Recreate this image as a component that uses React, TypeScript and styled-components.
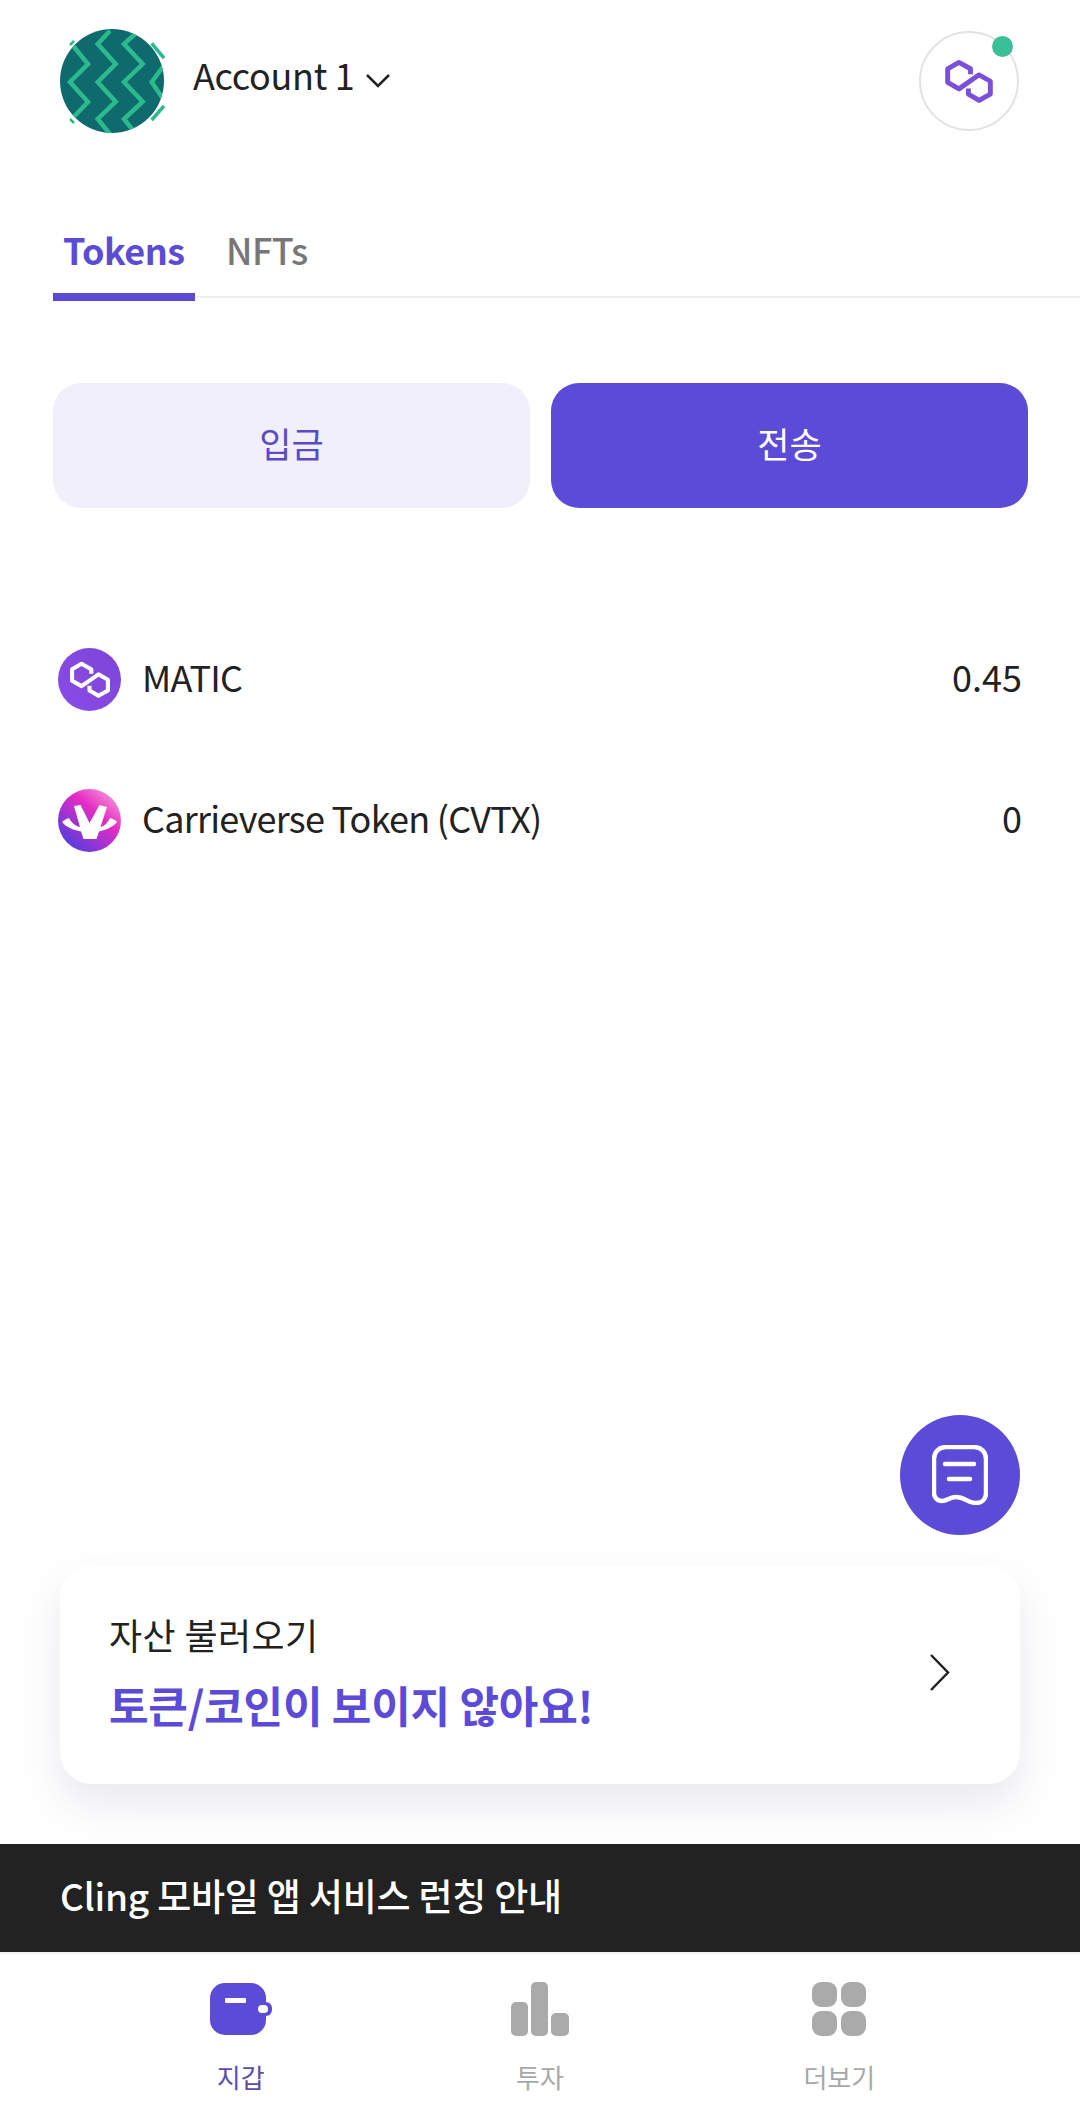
import React from 'react';
import styled, { createGlobalStyle } from 'styled-components';

const PURPLE = '#5b4bd6';
const FONT = '"Noto Sans CJK KR", "Noto Sans", sans-serif';

const GlobalStyle = createGlobalStyle`
	html, body {
		margin: 0;
		padding: 0;
		background: #fff;
	}
	* {
		box-sizing: border-box;
	}
`;

const Page = styled.div`
	width: 1080px;
	height: 2120px;
	display: flex;
	flex-direction: column;
	overflow: hidden;
	background: #fff;
	font-family: ${FONT};
	color: #222;
`;

const Header = styled.header`
	display: flex;
	align-items: center;
	justify-content: space-between;
	padding: 29px 61px 0 60px;
`;

const AccountButton = styled.div`
	display: flex;
	align-items: center;
	gap: 12px;
`;

const AccountName = styled.span`
	margin-left: 16px;
	padding-bottom: 14px;
	font-size: 36px;
	line-height: 52px;
	letter-spacing: -0.3px;
`;

const NetworkBadge = styled.div`
	position: relative;
	width: 100px;
	height: 100px;
	border: 2px solid #e2e2e2;
	border-radius: 50%;
	display: flex;
	align-items: center;
	justify-content: center;
`;

const StatusDot = styled.span`
	position: absolute;
	top: 3px;
	right: 4px;
	width: 21px;
	height: 21px;
	border-radius: 50%;
	background: #3bbf97;
`;

const TabBar = styled.nav`
	display: flex;
	margin: 86px 0 0 53px;
	border-bottom: 2px solid #eee;
`;

const Tab = styled.div<{ $active?: boolean }>`
	width: ${(p) => (p.$active ? '142px' : 'auto')};
	height: 82px;
	margin-bottom: -5px;
	padding: 4px 0 0 ${(p) => (p.$active ? '10px' : '31px')};
	border-bottom: ${(p) => (p.$active ? `8px solid ${PURPLE}` : 'none')};
	font-size: 36px;
	line-height: 52px;
	letter-spacing: -0.5px;
	font-weight: ${(p) => (p.$active ? 700 : 500)};
	color: ${(p) => (p.$active ? PURPLE : '#777')};
`;

const Actions = styled.div`
	display: grid;
	grid-template-columns: 1fr 1fr;
	gap: 21px;
	margin: 85px 52px 0 53px;
`;

const ActionButton = styled.button<{ $primary?: boolean }>`
	height: 125px;
	padding: 0 0 7px;
	border: 0;
	border-radius: 28px;
	font-family: ${FONT};
	font-size: 35px;
	background: ${(p) => (p.$primary ? PURPLE : '#f1effb')};
	color: ${(p) => (p.$primary ? '#fff' : '#5a4bc4')};
`;

const TokenList = styled.div`
	margin-top: 101px;
	padding: 0 58px;
`;

const TokenRow = styled.div`
	height: 141px;
	display: flex;
	align-items: center;
	font-size: 36px;
`;

const TokenName = styled.span`
	flex: 1;
	margin-left: 21px;
	padding-bottom: 8px;
	letter-spacing: -0.75px;
`;

const TokenValue = styled.span`
	padding-bottom: 8px;
`;

const TokenIcon = styled.div<{ $bg: string }>`
	width: 63px;
	height: 63px;
	border-radius: 50%;
	display: flex;
	align-items: center;
	justify-content: center;
	background: ${(p) => p.$bg};
`;

const Bottom = styled.div`
	margin-top: auto;
	display: flex;
	flex-direction: column;
`;

const Fab = styled.button`
	align-self: flex-end;
	width: 120px;
	height: 120px;
	margin-right: 60px;
	padding: 0;
	border: 0;
	border-radius: 50%;
	background: ${PURPLE};
	display: flex;
	align-items: center;
	justify-content: center;
`;

const ImportCard = styled.div`
	height: 219px;
	margin: 30px 60px 0;
	padding: 0 69px 0 49px;
	border-radius: 32px;
	background: #fff;
	box-shadow: 0 20px 44px rgba(70, 70, 120, 0.12);
	display: flex;
	align-items: center;
	justify-content: space-between;
`;

const CardText = styled.div`
	padding-bottom: 8px;
`;

const CardTitle = styled.div`
	font-size: 36px;
	line-height: 50px;
	letter-spacing: 0.4px;
`;

const CardHeadline = styled.div`
	margin-top: 16px;
	font-size: 43px;
	line-height: 58px;
	font-weight: 700;
	letter-spacing: -0.2px;
	color: ${PURPLE};
`;

const CardChevron = styled.div`
	display: flex;
	margin-bottom: 5px;
`;

const NoticeBar = styled.div`
	height: 108px;
	margin-top: 60px;
	padding-left: 60px;
	background: #222;
	color: #fff;
	font-size: 37px;
	font-weight: 500;
	line-height: 102px;
	letter-spacing: -0.2px;
`;

const NavBar = styled.nav`
	height: 168px;
	padding: 27px 91px 0;
	display: grid;
	grid-template-columns: repeat(3, 1fr);
	border-top: 2px solid #f1f1f1;
`;

const NavItem = styled.div<{ $active?: boolean }>`
	display: flex;
	flex-direction: column;
	align-items: center;
	font-size: 26px;
	line-height: 38px;
	color: ${(p) => (p.$active ? '#5a4db0' : '#a8a8a8')};
`;

const NavIcon = styled.div`
	height: 56px;
	margin-bottom: 21px;
	display: flex;
	align-items: center;
`;

const PolygonMark: React.FC<{ color: string; width: number; stroke?: number }> = ({ color, width, stroke = 16 }) => (
	<svg width={width} viewBox="188 168 164 147" fill="none">
		<path
			d="M275 218V200L237 179L200 200V245L237 266L303 220L340 241V283L303 304L268 283V265"
			stroke={color}
			strokeWidth={stroke}
			strokeLinejoin="round"
		/>
	</svg>
);

const Avatar = () => (
	<svg width="105" height="104" viewBox="0 0 105 104" fill="none">
		<defs>
			<clipPath id="avatarClip">
				<circle cx="52" cy="52" r="52" />
			</clipPath>
		</defs>
		<circle cx="52" cy="52" r="52" fill="#0f6a6e" />
		<g clipPath="url(#avatarClip)" stroke="#2cb98b" strokeWidth="4.5">
			<path d="M11.7 15L28 35L10 53L28 73L11.7 90" />
			<path d="M50 1.7L37.7 15L55.7 35L37.7 53L55.7 72.7L37.7 90L50 105" />
			<path d="M76 4L64 15L82.7 35L64 53L82.7 72.7L64 90L76 105" />
			<path d="M105 35L91.7 53L105 72.7" />
		</g>
		<path d="M91.7 14.4L104 29M104 77L91.7 91" stroke="#2cb98b" strokeWidth="3.5" />
		<path d="M10 16L14 12M10 90L14 94" stroke="#2cb98b" strokeWidth="2.5" />
	</svg>
);

const CvtxMark = () => (
	<svg width="63" height="63" viewBox="0 0 63 63">
		<path
			d="M16 17L22.5 16L31.5 34L41.5 16L49 18L42.5 38C47 37 50 33 52 29C55 30 58 31 59 33C55 38 48 41 41 42.5L38.5 50L25.5 50L23 42.5C15 41 8 38 4 33C6 31 8 30 11 29C13 33 17 37 22 38Z"
			fill="#fff"
		/>
	</svg>
);

const Chevron: React.FC<{ width: number; height: number; d: string; box: string }> = ({ width, height, d, box }) => (
	<svg width={width} height={height} viewBox={box} fill="none">
		<path d={d} stroke="#222" strokeWidth="2.5" />
	</svg>
);

const NotesIcon = () => (
	<svg width="56" height="60" viewBox="0 0 56 60" fill="none" stroke="#fff" strokeWidth="4.5" strokeLinecap="round">
		<path d="M14 2H42C49 2 54 7 54 14V48C54 54 50 58 44 58C36 58 33 52 24 52C18 52 15 56 10 56C5 56 2 52 2 48V14C2 7 7 2 14 2Z" />
		<path d="M13 19H42M17 34H38" />
	</svg>
);

const WalletIcon = () => (
	<svg width="62" height="52" viewBox="0 0 62 52">
		<rect x="0" y="0" width="56" height="52" rx="15" fill={PURPLE} />
		<rect x="44" y="19" width="18" height="14" rx="6" fill={PURPLE} />
		<rect x="48" y="22" width="10" height="8" rx="4" fill="#fff" />
		<rect x="15" y="15" width="21" height="5" rx="1" fill="#fff" />
	</svg>
);

const BarsIcon = () => (
	<svg width="58" height="54" viewBox="0 0 58 54" fill="#aaa">
		<rect x="0" y="20" width="17" height="34" rx="5" />
		<rect x="20" y="0" width="17" height="54" rx="5" />
		<rect x="40" y="31" width="18" height="23" rx="5" />
	</svg>
);

const GridIcon = () => (
	<svg width="54" height="54" viewBox="0 0 54 54" fill="#aaa">
		<rect x="0" y="0" width="25" height="25" rx="9" />
		<rect x="29" y="0" width="25" height="25" rx="9" />
		<rect x="0" y="29" width="25" height="25" rx="9" />
		<rect x="29" y="29" width="25" height="25" rx="9" />
	</svg>
);

const App: React.FC = () => (
	<Page>
		<GlobalStyle />
		<Header>
			<AccountButton>
				<Avatar />
				<AccountName>Account 1</AccountName>
				<Chevron width={24} height={14} box="0 0 24 14" d="M1 1L12 12L23 1" />
			</AccountButton>
			<NetworkBadge>
				<PolygonMark color="#7b4fd8" width={50} />
				<StatusDot />
			</NetworkBadge>
		</Header>

		<TabBar>
			<Tab $active>Tokens</Tab>
			<Tab>NFTs</Tab>
		</TabBar>

		<Actions>
			<ActionButton>입금</ActionButton>
			<ActionButton $primary>전송</ActionButton>
		</Actions>

		<TokenList>
			<TokenRow>
				<TokenIcon $bg="linear-gradient(45deg, #8a4be8, #7d45d6)">
					<PolygonMark color="#fff" width={42} />
				</TokenIcon>
				<TokenName>MATIC</TokenName>
				<TokenValue>0.45</TokenValue>
			</TokenRow>
			<TokenRow>
				<TokenIcon $bg="linear-gradient(40deg, #4f3ce0 10%, #e52cc4 62%, #f7a6da 95%)">
					<CvtxMark />
				</TokenIcon>
				<TokenName>Carrieverse Token (CVTX)</TokenName>
				<TokenValue>0</TokenValue>
			</TokenRow>
		</TokenList>

		<Bottom>
			<Fab>
				<NotesIcon />
			</Fab>
			<ImportCard>
				<CardText>
					<CardTitle>자산 불러오기</CardTitle>
					<CardHeadline>토큰/코인이 보이지 않아요!</CardHeadline>
				</CardText>
				<CardChevron>
					<Chevron width={22} height={37} box="0 0 22 37" d="M2 1L19 18.5L2 36" />
				</CardChevron>
			</ImportCard>
			<NoticeBar>Cling 모바일 앱 서비스 런칭 안내</NoticeBar>
			<NavBar>
				<NavItem $active>
					<NavIcon>
						<WalletIcon />
					</NavIcon>
					지갑
				</NavItem>
				<NavItem>
					<NavIcon>
						<BarsIcon />
					</NavIcon>
					투자
				</NavItem>
				<NavItem>
					<NavIcon>
						<GridIcon />
					</NavIcon>
					더보기
				</NavItem>
			</NavBar>
		</Bottom>
	</Page>
);

export default App;
